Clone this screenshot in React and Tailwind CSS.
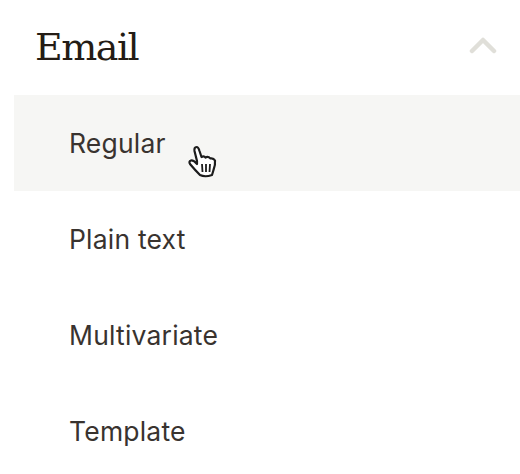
import React from 'react'

const items = ['Regular', 'Plain text', 'Multivariate', 'Template']

function HandCursor() {
  return (
    <svg width="30" height="34" viewBox="0 0 30 34" className="absolute left-[187px] top-[145px]">
      <path
        d="M10 16 L7.500 6 Q7 2 9.500 2 Q11.500 2 12.500 6 L14.500 12 Q17 10.500 18.500 12.500 Q21 11 23.500 13.500 Q26.500 13 28 15.500 Q28.500 20 26.500 25 L25 30 Q18 32.500 13 30 Q8 25 3 19 Q1.500 16.500 4 15.500 Q6.500 15 10 19 Z"
        fill="#fff"
        stroke="#1c1c1c"
        strokeWidth="2.200"
        strokeLinejoin="round"
      />
      <path d="M15 19 L15.500 27 M19 19 V27 M23 19 L22.500 27" stroke="#1c1c1c" strokeWidth="1.800" />
    </svg>
  )
}

export default function App() {
  return (
    <div className="relative w-[520px] h-[474px] overflow-hidden bg-white pl-[14px] font-['Inter',sans-serif] text-[#39332f]">
      <div className="flex items-center justify-between h-[95px] pl-[21px] pr-[23px] pb-[2px]">
        <h2 className="font-['DejaVu_Serif',serif] text-[38px] leading-none tracking-[-1.500px] text-[#241c15]">Email</h2>
        <svg width="28" height="18" viewBox="0 0 28 18" fill="none" stroke="#e0dfd9" strokeWidth="4.500" strokeLinecap="round" strokeLinejoin="round" className="mb-[3px]">
          <path d="M3 15 L14 4 L25 15" />
        </svg>
      </div>
      <ul className="flex flex-col">
        {items.map((item, i) => (
          <li
            key={item}
            className={`flex items-center h-[96px] pl-[55px] text-[26.500px] leading-none tracking-[0.2px] ${i === 0 ? 'bg-[#f6f6f4]' : ''}`}
          >
            {item}
          </li>
        ))}
      </ul>
      <HandCursor />
    </div>
  )
}
